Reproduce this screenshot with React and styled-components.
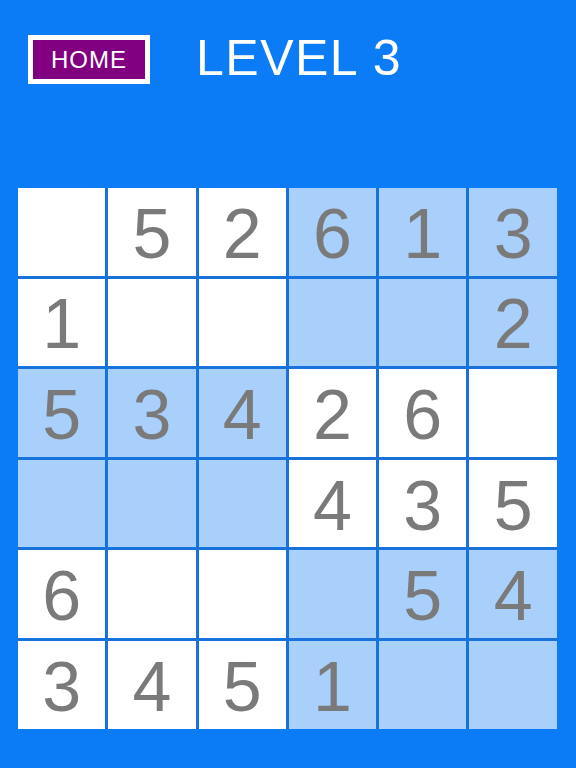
import React from "react";
import styled, { createGlobalStyle } from "styled-components";

const GlobalStyle = createGlobalStyle`
  html, body {
    margin: 0;
    padding: 0;
    background: #0b7cf6;
  }
  body {
    font-family: "Liberation Sans", Arial, sans-serif;
  }
`;

const Page = styled.div`
  width: 576px;
  height: 768px;
  background: #0b7cf6;
  box-sizing: border-box;
  padding: 35px 0 0 18px;
`;

const Header = styled.div`
  display: flex;
  align-items: center;
  padding-left: 10px;
  height: 49px;
`;

const HomeButton = styled.button`
  width: 122px;
  height: 49px;
  box-sizing: border-box;
  border: 5px solid #ffffff;
  background: #800080;
  color: #ffffff;
  font-family: "Liberation Sans", Arial, sans-serif;
  font-size: 24px;
  letter-spacing: 1px;
  line-height: 1;
  padding: 0;
  cursor: pointer;
`;

const Title = styled.h1`
  margin: 0 0 4px 46px;
  font-weight: normal;
  font-size: 50px;
  letter-spacing: 1.5px;
  line-height: 1;
  color: #ffffff;
`;

const Board = styled.div`
  margin-top: 104px;
  display: grid;
  grid-template-columns: repeat(6, 87.3px);
  grid-template-rows: repeat(6, 87.6px);
  gap: 3px;
  width: 539px;
  background: #1872dc;
`;

const Cell = styled.div`
  display: flex;
  align-items: center;
  justify-content: center;
  padding-top: 4px;
  box-sizing: border-box;
  background: ${(p) => (p.$shaded ? "#a9cffb" : "#ffffff")};
  color: #7a7a7a;
  font-size: 70px;
  line-height: 1;
`;

const rows = [
  ["", "5", "2", "6", "1", "3"],
  ["1", "", "", "", "", "2"],
  ["5", "3", "4", "2", "6", ""],
  ["", "", "", "4", "3", "5"],
  ["6", "", "", "", "5", "4"],
  ["3", "4", "5", "1", "", ""],
];

const isShaded = (r, c) => {
  const boxRow = Math.floor(r / 2);
  const boxCol = Math.floor(c / 3);
  return (boxRow + boxCol) % 2 === 1;
};

const App = () => {
  return (
    <Page>
      <GlobalStyle />
      <Header>
        <HomeButton>HOME</HomeButton>
        <Title>LEVEL 3</Title>
      </Header>
      <Board>
        {rows.map((row, r) =>
          row.map((v, c) => (
            <Cell key={r + "-" + c} $shaded={isShaded(r, c)}>
              {v}
            </Cell>
          ))
        )}
      </Board>
    </Page>
  );
};

export default App;
